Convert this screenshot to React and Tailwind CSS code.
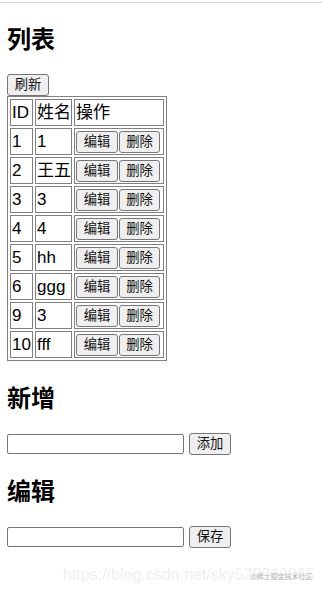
import React from 'react';

const rows = [
  { id: 1, name: '1' },
  { id: 2, name: '王五' },
  { id: 3, name: '3' },
  { id: 4, name: '4' },
  { id: 5, name: 'hh' },
  { id: 6, name: 'ggg' },
  { id: 9, name: '3' },
  { id: 10, name: 'fff' },
];

const font = { fontFamily: '"Liberation Sans", "Noto Sans CJK SC", sans-serif' };

const btn =
  'h-[22px] px-[6px] text-[13.33px] leading-[20px] bg-[#efefef] border border-[#767676] rounded-[3px] text-[#111]';

const Heading = ({ children, className }) => (
  <h2 className={`text-[24px] font-bold leading-[28px] h-[28px] text-black ${className}`}>{children}</h2>
);

const Cell = ({ children, className = '' }) => (
  <td className={`h-[27px] border border-[#808080] px-[1px] py-0 align-middle whitespace-nowrap overflow-hidden ${className}`}>
    {children}
  </td>
);

const App = () => {
  return (
    <div className="w-[322px] h-[592px] bg-white overflow-hidden text-black" style={font}>
      <div className="mt-[2px] h-[1px] bg-[#d4d4d4]" />
      <div className="px-[7px]">
        <Heading className="mt-[23px]">列表</Heading>
        <button className={`${btn} mt-[20px] block w-[42px]`}>刷新</button>
        <table className="table-fixed border-separate border-spacing-[2px] border border-[#808080] w-[160px] text-[17px] leading-[20px]">
          <colgroup>
            <col className="w-[23px]" />
            <col className="w-[37px]" />
            <col className="w-[90px]" />
          </colgroup>
          <tbody>
            <tr>
              <Cell>ID</Cell>
              <Cell>姓名</Cell>
              <Cell>操作</Cell>
            </tr>
            {rows.map((r) => (
              <tr key={r.id}>
                <Cell>{r.id}</Cell>
                <Cell>{r.name}</Cell>
                <Cell>
                  <div className="flex gap-[1px]">
                    <button className={`${btn} w-[42px]`}>编辑</button>
                    <button
                      className={`${btn} w-[41px] text-[#5b1a4c] ${r.id === 4 ? 'bg-[#e3e3e3]' : ''}`}
                    >
                      删除
                    </button>
                  </div>
                </Cell>
              </tr>
            ))}
          </tbody>
        </table>

        <Heading className="mt-[24px]">新增</Heading>
        <div className="mt-[20px] flex items-center gap-[5px]">
          <input className="w-[177px] h-[20px] border border-[#767676] rounded-[2px] outline-none" />
          <button className={`${btn} w-[42px]`}>添加</button>
        </div>

        <Heading className="mt-[23px]">编辑</Heading>
        <div className="mt-[20px] flex items-center gap-[5px]">
          <input className="w-[177px] h-[20px] border border-[#767676] rounded-[2px] outline-none" />
          <button className={`${btn} w-[42px]`}>保存</button>
        </div>
      </div>

      <div className="relative mt-[19px] ml-[63px] text-[16px] leading-[16px] text-[#efefef] whitespace-nowrap">
        https://blog.csdn.net/sky529063865
        <span className="absolute left-[187px] top-[5px] text-[7px] leading-[8px] text-[#b8b8b8]" style={{ fontFamily: '"Noto Sans CJK SC", sans-serif' }}>
          @稀土掘金技术社区
        </span>
      </div>
    </div>
  );
};

export default App;
